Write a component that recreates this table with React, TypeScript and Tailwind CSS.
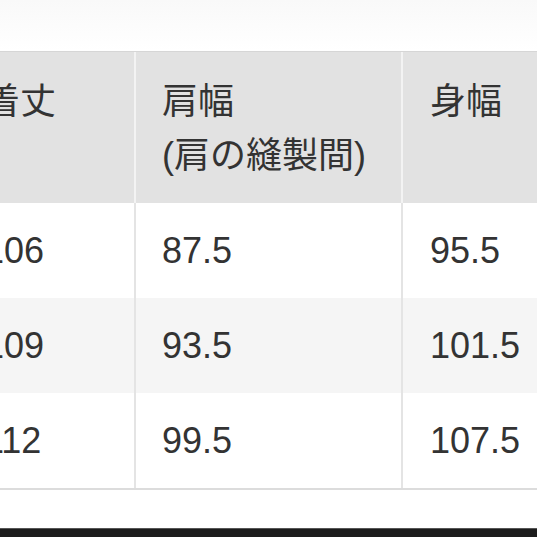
import React from 'react';

const rows = [
  { length: '106', shoulder: '87.5', body: '95.5', bg: 'bg-white' },
  { length: '109', shoulder: '93.5', body: '101.5', bg: 'bg-[#f5f5f5]' },
  { length: '112', shoulder: '99.5', body: '107.5', bg: 'bg-white' },
];

const App: React.FC = () => {
  return (
    <div
      className="w-[537px] h-[537px] overflow-hidden bg-white flex flex-col text-[#333]"
      style={{ fontFamily: '"Liberation Sans", "Noto Sans CJK JP", sans-serif' }}
    >
      {/* top blank area */}
      <div className="h-[51px] shrink-0 bg-gradient-to-b from-[#f9f9f9] to-white" />

      {/* size table, first column cut off on the left */}
      <div className="ml-[-42px] w-[640px] shrink-0">
        {/* header */}
        <div className="grid grid-cols-[176px_2px_265px_2px_1fr] h-[152px] bg-[#e2e2e2] border-t border-[#d6d6d6]">
          <div className="pl-[26px] pt-[23px] text-[36px] leading-[54px]">着丈</div>
          <div className="bg-[#f3f3f3]" />
          <div className="pl-[26px] pt-[23px] text-[36px] leading-[54px]">
            <div>肩幅</div>
            <div>(肩の縫製間)</div>
          </div>
          <div className="bg-[#f3f3f3]" />
          <div className="pl-[27px] pt-[23px] text-[36px] leading-[54px]">身幅</div>
        </div>

        {/* body rows */}
        {rows.map((r) => (
          <div
            key={r.length}
            className={`grid grid-cols-[176px_2px_265px_2px_1fr] h-[95px] items-center ${r.bg}`}
          >
            <div className="pl-[26px] text-[36px]">{r.length}</div>
            <div className="self-stretch bg-[#e4e4e4]" />
            <div className="pl-[26px] text-[36px]">{r.shoulder}</div>
            <div className="self-stretch bg-[#e4e4e4]" />
            <div className="pl-[27px] text-[36px]">{r.body}</div>
          </div>
        ))}
        <div className="h-[2px] bg-[#dcdcdc]" />
      </div>

      <div className="flex-1" />

      {/* dark bar at the bottom edge */}
      <div className="h-[9px] shrink-0 bg-[#1c1c1c] border-t border-[#555]" />
    </div>
  );
};

export default App;
